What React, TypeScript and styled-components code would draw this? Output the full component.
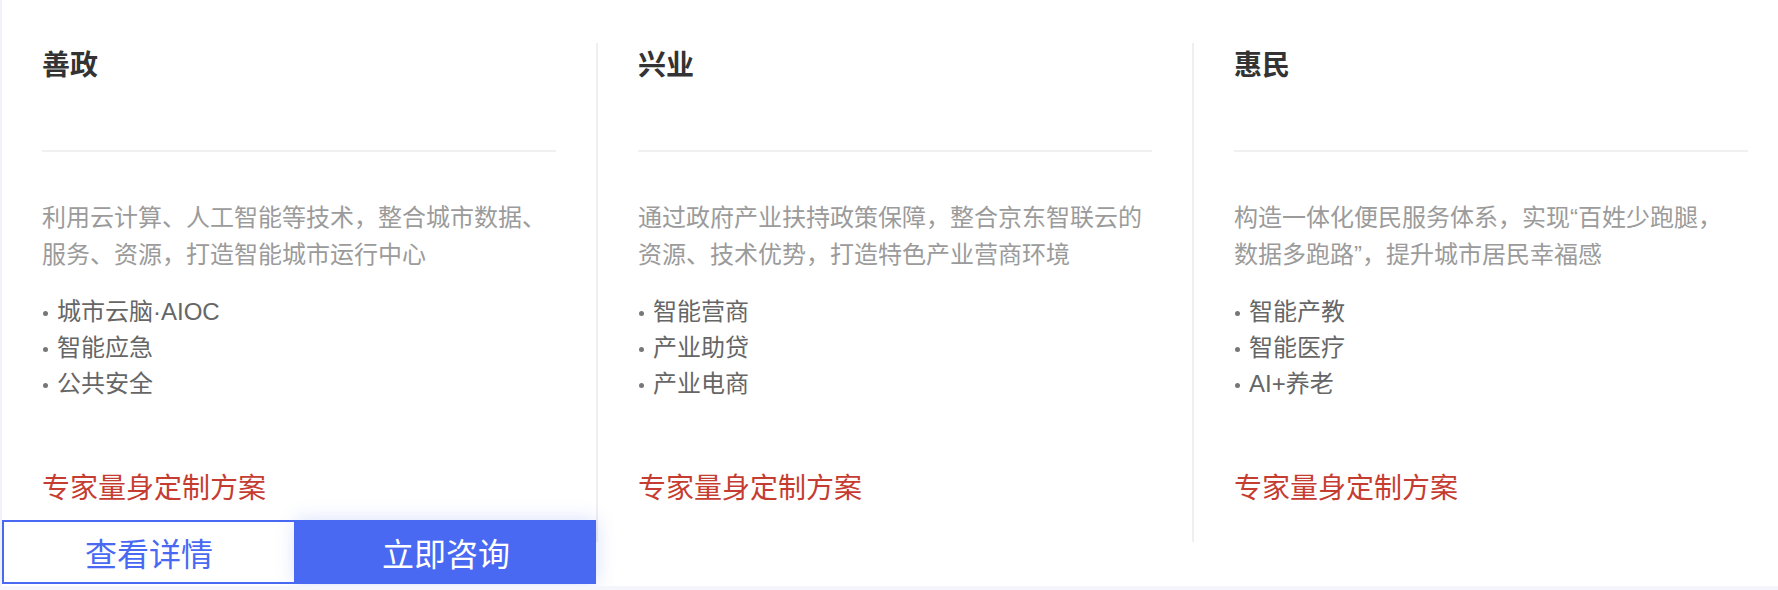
import styled, { createGlobalStyle } from 'styled-components';

const GlobalStyle = createGlobalStyle`
	html, body {
		margin: 0;
		padding: 0;
		background: #f5f6fb;
	}
	body {
		font-family: 'Liberation Sans', 'Noto Sans CJK SC', sans-serif;
		overflow: hidden;
	}
	* {
		box-sizing: border-box;
	}
`;

const solutions = [
	{
		title: '善政',
		description: [
			'利用云计算、人工智能等技术，整合城市数据、',
			'服务、资源，打造智能城市运行中心',
		],
		items: ['城市云脑·AIOC', '智能应急', '公共安全'],
	},
	{
		title: '兴业',
		description: [
			'通过政府产业扶持政策保障，整合京东智联云的',
			'资源、技术优势，打造特色产业营商环境',
		],
		items: ['智能营商', '产业助贷', '产业电商'],
	},
	{
		title: '惠民',
		description: [
			'构造一体化便民服务体系，实现“百姓少跑腿，',
			'数据多跑路”，提升城市居民幸福感',
		],
		items: ['智能产教', '智能医疗', 'AI+养老'],
	},
];

const App = () => {
	return (
		<>
			<GlobalStyle />
			<Panel>
				{solutions.map((item, idx) => (
					<Column key={item.title} $divided={idx > 0}>
						<Inner $divided={idx > 0}>
							<Header>
								<Title>{item.title}</Title>
							</Header>
							<Description>
								{item.description.map((line) => (
									<DescLine key={line}>{line}</DescLine>
								))}
							</Description>
							<List>
								{item.items.map((entry) => (
									<ListItem key={entry}>{entry}</ListItem>
								))}
							</List>
							<CustomLink>专家量身定制方案</CustomLink>
						</Inner>
						{idx === 0 && (
							<Actions>
								<GhostButton>查看详情</GhostButton>
								<PrimaryButton>立即咨询</PrimaryButton>
							</Actions>
						)}
					</Column>
				))}
			</Panel>
		</>
	);
};

export default App;

const Panel = styled.section`
	display: flex;
	width: 1790px;
	height: 586px;
	background: #ffffff;
	border-left: 2px solid #f1f2f8;
`;
const Column = styled.div<{ $divided: boolean }>`
	position: relative;
	flex: 0 0 ${({ $divided }) => ($divided ? 596 : 594)}px;
	padding-top: 43px;
	background: #ffffff;
`;
const Inner = styled.div<{ $divided: boolean }>`
	display: flex;
	flex-direction: column;
	height: 499px;
	padding: 0 40px 33px;
	border-left: ${({ $divided }) => ($divided ? '2px solid #efefef' : 'none')};
`;
const Header = styled.div`
	height: 109px;
	padding-top: 3px;
	border-bottom: 2px solid #f0f0f0;
`;
const Title = styled.h3`
	margin: 0;
	font-size: 28px;
	line-height: 40px;
	font-weight: 600;
	color: #333333;
`;
const Description = styled.p`
	margin: 47px 0 0;
	font-size: 24px;
	line-height: 37px;
	color: #9b9b9b;
	white-space: nowrap;
`;
const DescLine = styled.span`
	display: block;
`;
const List = styled.ul`
	list-style: none;
	margin: 21px 0 0;
	padding: 0;
`;
const ListItem = styled.li`
	display: flex;
	align-items: center;
	font-size: 24px;
	line-height: 36px;
	color: #666666;

	&::before {
		content: '';
		flex: 0 0 5px;
		height: 5px;
		margin: 2px 9px 0 1px;
		border-radius: 50%;
		background: #777777;
	}
`;
const CustomLink = styled.a`
	margin-top: auto;
	font-size: 28px;
	line-height: 40px;
	color: #c53c31;
	cursor: pointer;
`;
const Actions = styled.div`
	position: absolute;
	left: 0;
	right: 0;
	bottom: 2px;
	display: flex;
	height: 64px;
	z-index: 1;
`;
const ActionButton = styled.button`
	flex: 1 1 0;
	height: 100%;
	margin: 0;
	font-family: 'Liberation Sans', 'Noto Sans CJK SC', sans-serif;
	font-size: 32px;
	cursor: pointer;
`;
const GhostButton = styled(ActionButton)`
	flex-basis: 294px;
	flex-grow: 0;
	border: 2px solid #4a69f2;
	background: #ffffff;
	color: #4a69f2;
`;
const PrimaryButton = styled(ActionButton)`
	border: none;
	background: #4a69f2;
	color: #ffffff;
	box-shadow: 0 0 18px rgba(74, 105, 242, 0.22);
`;
